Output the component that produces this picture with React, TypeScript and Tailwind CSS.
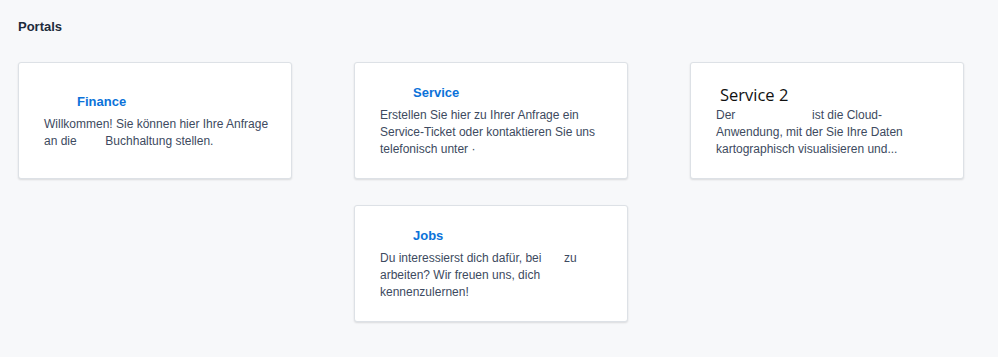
import React from "react";

function Gap({ w }: { w: string }) {
  return <span className={`inline-block ${w}`} />;
}

function Card({
  title,
  children,
  className = "",
  alt = false,
}: {
  title: string;
  children: React.ReactNode;
  className?: string;
  alt?: boolean;
}) {
  return (
    <div
      className={`h-[117px] bg-white border border-[#dde1e6] rounded-[3px] shadow-[0_1px_2px_rgba(0,0,0,0.12)] flex flex-col justify-center pl-[25px] pr-[18px] ${className}`}
    >
      {alt ? (
        <div className="pl-[4px] text-[16.5px] leading-[22px] text-[#111] font-['Open_Sans',sans-serif]">
          {title}
        </div>
      ) : (
        <div className="pl-[33px] text-[13px] leading-[20px] font-bold text-[#0b72d9]">
          {title}
        </div>
      )}
      <div className={`${alt ? "mt-[1px]" : "mt-[4px]"} text-[12px] leading-[17px] text-[#3d4a60]`}>
        {children}
      </div>
    </div>
  );
}

export default function App() {
  return (
    <div className="min-h-screen w-full bg-[#f7f8fa] font-['Liberation_Sans',Arial,sans-serif] px-[18px] pt-[18px]">
      <h1 className="text-[13px] leading-[18px] font-bold text-[#1d2b3c]">Portals</h1>
      <div className="mt-[26px] grid grid-cols-[274px_274px_274px] gap-x-[62px] gap-y-[26px]">
        <Card title="Finance">
          Willkommen! Sie können hier Ihre Anfrage
          <br />
          an die <Gap w="w-[22px]" /> Buchhaltung stellen.
        </Card>
        <Card title="Service">
          Erstellen Sie hier zu Ihrer Anfrage ein Service-Ticket oder kontaktieren Sie uns telefonisch unter ·
        </Card>
        <Card title="Service 2" alt>
          Der <Gap w="w-[70px]" /> ist die Cloud-
          <br />
          Anwendung, mit der Sie Ihre Daten
          <br />
          kartographisch visualisieren und...
        </Card>
        <Card title="Jobs" className="col-start-2">
          Du interessierst dich dafür, bei <Gap w="w-[16px]" /> zu
          <br />
          arbeiten? Wir freuen uns, dich
          <br />
          kennenzulernen!
        </Card>
      </div>
    </div>
  );
}
